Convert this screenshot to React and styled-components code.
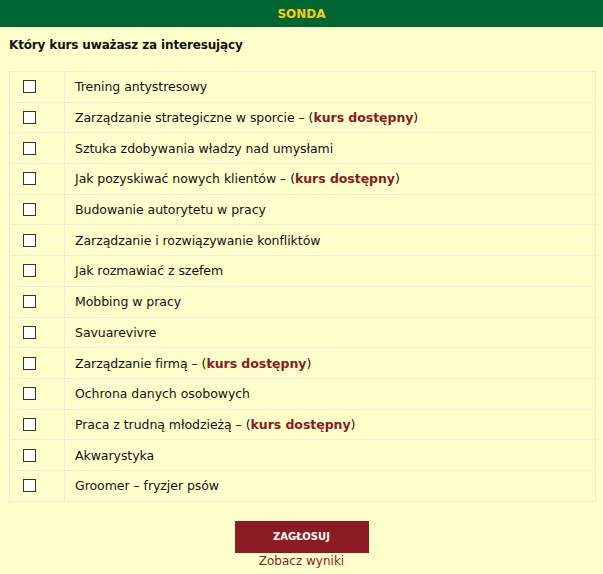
import React, { useState } from 'react';
import styled, { createGlobalStyle } from 'styled-components';

const COURSES = [
  { name: "Trening antystresowy" },
  { name: "Zarządzanie strategiczne w sporcie", available: true },
  { name: "Sztuka zdobywania władzy nad umysłami" },
  { name: "Jak pozyskiwać nowych klientów", available: true },
  { name: "Budowanie autorytetu w pracy" },
  { name: "Zarządzanie i rozwiązywanie konfliktów" },
  { name: "Jak rozmawiać z szefem" },
  { name: "Mobbing w pracy" },
  { name: "Savuarevivre" },
  { name: "Zarządzanie firmą", available: true },
  { name: "Ochrona danych osobowych" },
  { name: "Praca z trudną młodzieżą", available: true },
  { name: "Akwarystyka" },
  { name: "Groomer – fryzjer psów" },
];

const Global = createGlobalStyle`
  html, body {
    margin: 0;
    background: #ffffcc;
  }
  body {
    font-family: "DejaVu Sans", Verdana, sans-serif;
    color: #111;
  }
`;

const Container = styled.div`
  width: 603px;
  min-height: 574px;
  background: #ffffcc;
`;

const Header = styled.div`
  height: 27px;
  background: #006633;
  color: #ffcc00;
  font-size: 12px;
  font-weight: bold;
  display: flex;
  align-items: center;
  justify-content: center;
`;

const Question = styled.div`
  padding: 10px 9px 0;
  height: 20px;
  font-size: 12px;
  font-weight: bold;
  line-height: 16px;
  letter-spacing: -0.15px;
`;

const Table = styled.div`
  margin: 14px 7px 0 9px;
  border: 1px solid #ebebdf;
  border-bottom: none;
`;

const Row = styled.label`
  display: grid;
  grid-template-columns: 55px 1fr;
  height: 29.7px;
  border-bottom: 1px solid #ebebdf;
  cursor: pointer;
`;

const BoxCell = styled.div`
  border-right: 1px solid #ebebdf;
  display: flex;
  align-items: center;
  padding-left: 13px;
`;

const Box = styled.span`
  width: 11px;
  height: 11px;
  border: 1px solid #333;
  background: ${p => (p.checked ? "#333" : "#fff")};
  box-shadow: ${p => (p.checked ? "inset 0 0 0 2px #fff" : "none")};
`;

const Name = styled.div`
  display: flex;
  align-items: center;
  padding-left: 10px;
  font-size: 12.5px;
  letter-spacing: -0.05px;
`;

const Available = styled.b`
  color: #8b1a1a;
`;

const Footer = styled.div`
  display: flex;
  flex-direction: column;
  align-items: center;
  padding-top: 19px;
`;

const Button = styled.button`
  width: 134px;
  height: 32px;
  border: none;
  background: #8f1b22;
  color: #fff;
  font-family: "DejaVu Sans", Verdana, sans-serif;
  font-size: 10px;
  font-weight: bold;
  cursor: pointer;
`;

const ResultsLink = styled.a`
  margin-top: 1px;
  color: #8b1a1a;
  font-size: 12px;
  text-decoration: none;
`;

const App = () => {
  const [picked, setPicked] = useState({});

  const toggle = (i) => setPicked({ ...picked, [i]: !picked[i] });

  return (
    <Container>
      <Global />
      <Header>SONDA</Header>
      <Question>Który kurs uważasz za interesujący</Question>
      <Table>
        {COURSES.map((c, i) => (
          <Row key={c.name} onClick={() => toggle(i)}>
            <BoxCell>
              <Box checked={!!picked[i]} />
            </BoxCell>
            <Name>
              {c.name}
              {c.available && (
                <>&nbsp;– (<Available>kurs dostępny</Available>)</>
              )}
            </Name>
          </Row>
        ))}
      </Table>
      <Footer>
        <Button type="button">ZAGŁOSUJ</Button>
        <ResultsLink href="#">Zobacz wyniki</ResultsLink>
      </Footer>
    </Container>
  );
};

export default App;
